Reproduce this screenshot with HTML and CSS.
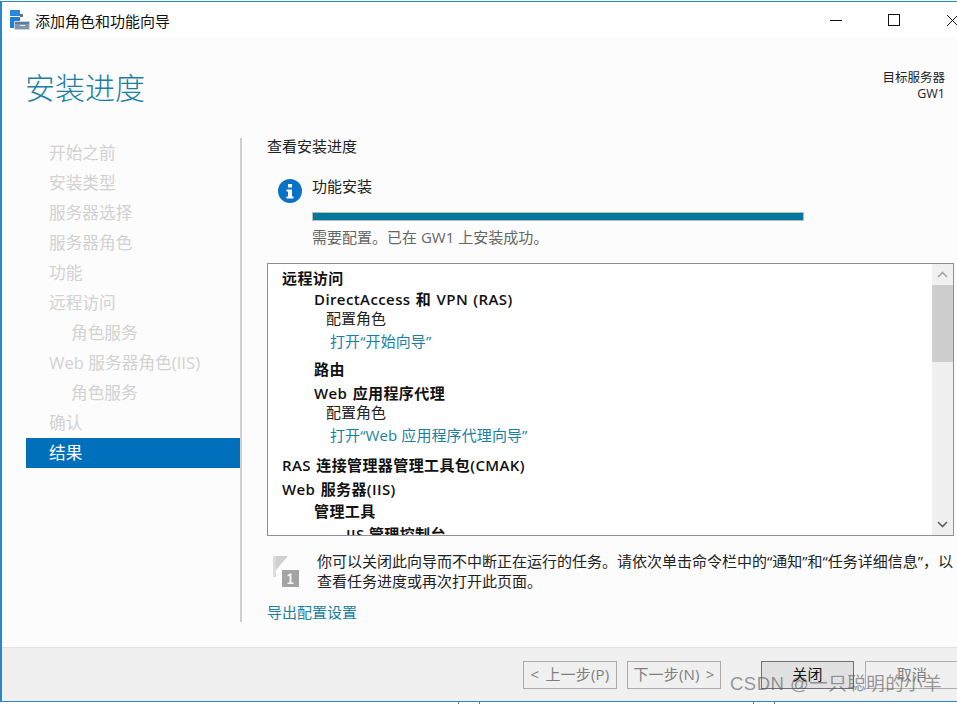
FILE: index.html
```html
<!DOCTYPE html>
<html lang="zh-CN">
<head>
    <meta charset="UTF-8">
    <title>添加角色和功能向导</title>
    <link rel="stylesheet" href="styles.css">
</head>
<body>
    <div class="window">
        <!-- Title bar -->
        <div class="titlebar">
            <svg class="app-icon" width="20" height="20" viewBox="0 0 20 20">
                <rect x="0" y="0" width="10" height="6" fill="#2a87d8"/>
                <rect x="0" y="7" width="10" height="11" fill="#1e7fd6"/>
                <rect x="10" y="4" width="3" height="3" fill="#5b6f86"/>
                <rect x="4" y="11" width="16" height="9" rx="1" fill="#c9d6e0"/>
                <rect x="5" y="12" width="14" height="7" fill="#7f97ad"/>
                <rect x="5" y="12" width="14" height="2" fill="#5f7a94"/>
                <rect x="10" y="15" width="5" height="1" fill="#e8eef3"/>
            </svg>
            <span class="title-text">添加角色和功能向导</span>
            <div class="win-buttons">
                <svg width="13" height="13" viewBox="0 0 13 13"><path d="M0 6.5H12" stroke="#111" fill="none"/></svg>
                <svg width="13" height="13" viewBox="0 0 13 13"><rect x="0.5" y="0.5" width="11" height="11" stroke="#111" fill="none"/></svg>
                <svg width="13" height="13" viewBox="0 0 13 13"><path d="M1 1L12 12M12 1L1 12" stroke="#111" fill="none"/></svg>
            </div>
        </div>

        <!-- Heading -->
        <div class="page-head">
            <h1>安装进度</h1>
            <div class="target">目标服务器<br>GW1</div>
        </div>

        <div class="content">
            <!-- Steps -->
            <ul class="steps">
                <li>开始之前</li>
                <li>安装类型</li>
                <li>服务器选择</li>
                <li>服务器角色</li>
                <li>功能</li>
                <li>远程访问</li>
                <li class="sub">角色服务</li>
                <li>Web 服务器角色(IIS)</li>
                <li class="sub">角色服务</li>
                <li>确认</li>
                <li class="active">结果</li>
            </ul>

            <div class="main">
                <div class="section-title">查看安装进度</div>

                <div class="status">
                    <svg class="info-icon" width="24" height="24" viewBox="0 0 24 24">
                        <circle cx="12" cy="12" r="12" fill="#0a72c6"/>
                        <rect x="10" y="5" width="4" height="3.5" fill="#fff"/>
                        <path d="M8.5 10.5H14V17.5H15.5V19.5H8.5V17.5H10V12.5H8.5Z" fill="#fff"/>
                    </svg>
                    <div class="status-body">
                        <div class="status-name">功能安装</div>
                        <div class="progress"><div class="progress-fill"></div></div>
                        <div class="status-msg">需要配置。已在 GW1 上安装成功。</div>
                    </div>
                </div>

                <div class="result-box">
                    <div class="result-list">
                        <div class="r1">远程访问</div>
                        <div class="r2 row-a">DirectAccess 和 VPN (RAS)</div>
                        <div class="r3">配置角色</div>
                        <div class="rlink">打开“开始向导”</div>
                        <div class="r2 row-b">路由</div>
                        <div class="r2 row-c">Web 应用程序代理</div>
                        <div class="r3">配置角色</div>
                        <div class="rlink">打开“Web 应用程序代理向导”</div>
                        <div class="r1 row-d">RAS 连接管理器管理工具包(CMAK)</div>
                        <div class="r1 row-c">Web 服务器(IIS)</div>
                        <div class="r2 row-e">管理工具</div>
                        <div class="r4">IIS 管理控制台</div>
                    </div>
                    <div class="scrollbar">
                        <div class="arrow">
                            <svg width="11" height="7" viewBox="0 0 11 7"><path d="M1 6L5.5 1.5L10 6" stroke="#a6a6a6" stroke-width="1.6" fill="none"/></svg>
                        </div>
                        <div class="thumb"></div>
                        <div class="track"></div>
                        <div class="arrow">
                            <svg width="11" height="7" viewBox="0 0 11 7"><path d="M1 1L5.5 5.5L10 1" stroke="#606060" stroke-width="1.6" fill="none"/></svg>
                        </div>
                    </div>
                </div>

                <div class="notice">
                    <svg class="flag-icon" width="27" height="32" viewBox="0 0 27 32">
                        <rect x="0" y="0" width="3" height="21" fill="#dcdcdc"/>
                        <path d="M3 0H15L3 14Z" fill="#d0d0d0"/>
                        <rect x="9" y="14" width="17" height="17" fill="#a3a3a3"/>
                        <path d="M18.5 17.5H17L14.5 19V20.5L16.5 19.7V26.5H14.5V28H20.5V26.5H18.5Z" fill="#f4f4f4"/>
                    </svg>
                    <p>你可以关闭此向导而不中断正在运行的任务。请依次单击命令栏中的“通知”和“任务详细信息”，以查看任务进度或再次打开此页面。</p>
                </div>

                <a class="export-link">导出配置设置</a>
            </div>
        </div>

        <!-- Footer -->
        <div class="footer">
            <button class="btn" disabled>&lt; 上一步(P)</button>
            <button class="btn" disabled>下一步(N) &gt;</button>
            <button class="btn btn-close">关闭</button>
            <button class="btn btn-cancel" disabled>取消</button>
        </div>
        <div class="watermark">CSDN @一只聪明的小羊</div>
    </div>
    <div class="tick tick-left"></div>
    <div class="tick tick-right"></div>
</body>
</html>
```

FILE: styles.css
```css
html, body {
    margin: 0;
    height: 100%;
    overflow: hidden;
}
body {
    position: relative;
    font-family: "Open Sans", "Noto Sans CJK SC", sans-serif;
    font-size: 15px;
    color: #1a1a1a;
    background-color: #fff;
}
.window {
    position: relative;
    width: 957px;
    height: 701px;
    box-sizing: border-box;
    margin-top: 1px;
    border-top: 1px solid #2b86cc;
    border-left: 2px solid #2b86cc;
    border-bottom: 1px solid #2b86cc;
    background-color: #fcfcfc;
    display: flex;
    flex-direction: column;
    overflow: hidden;
}
.tick {
    position: absolute;
    top: 702px;
    width: 20px;
    height: 2px;
    border-left: 1px solid #777;
    border-right: 1px solid #777;
}
.tick-left {
    left: 458px;
}
.tick-right {
    left: 753px;
}
.titlebar {
    height: 36px;
    flex: none;
    background-color: #fff;
    display: flex;
    align-items: center;
    padding-left: 8px;
}
.app-icon {
    margin-right: 5px;
}
.title-text {
    font-size: 15px;
    color: #111;
}
.win-buttons {
    margin-left: auto;
    margin-right: -2px;
    display: flex;
    gap: 45px;
}
.page-head {
    height: 100px;
    flex: none;
    display: flex;
    justify-content: space-between;
    box-sizing: border-box;
    padding: 31px 12px 0 23px;
}
.page-head h1 {
    margin: 0;
    font-size: 30px;
    line-height: 38px;
    font-weight: 300;
    color: #1a7fa3;
}
.target {
    margin-top: 1px;
    font-size: 12.5px;
    line-height: 16px;
    text-align: right;
    color: #222;
}
.content {
    flex: 1;
    display: flex;
    min-height: 0;
}
.steps {
    list-style: none;
    margin: 0 0 25px 24px;
    padding: 0;
    width: 216px;
    height: 484px;
    box-sizing: border-box;
    flex: none;
    border-right: 2px solid #d0d0d0;
}
.steps li {
    height: 30px;
    line-height: 30px;
    padding-left: 23px;
    font-size: 16.7px;
    color: #d2d2d2;
    white-space: nowrap;
}
.steps li.sub {
    padding-left: 45px;
}
.steps li.active {
    width: 214px;
    box-sizing: border-box;
    background-color: #0070bd;
    color: #fff;
}
.main {
    flex: 1;
    min-width: 0;
    padding-left: 25px;
    display: flex;
    flex-direction: column;
}
.section-title {
    height: 18px;
    line-height: 18px;
    margin-top: -1px;
    margin-bottom: 22px;
    color: #222;
}
.status {
    display: flex;
    margin-left: 11px;
}
.info-icon {
    flex: none;
    margin-right: 10px;
    margin-top: 2px;
}
.status-name {
    line-height: 18px;
    color: #222;
}
.progress {
    width: 492px;
    height: 9px;
    margin-top: 17px;
    box-sizing: border-box;
    border: 1px solid #bcbcbc;
    background-color: #e6e6e6;
}
.progress-fill {
    height: 100%;
    background-color: #00779b;
}
.status-msg {
    margin-top: 6px;
    line-height: 20px;
    color: #666;
}
.result-box {
    width: 687px;
    height: 273px;
    margin-top: 16px;
    box-sizing: border-box;
    border: 1px solid #8e8f94;
    background-color: #fff;
    display: flex;
}
.result-list {
    flex: 1;
    min-width: 0;
    overflow: hidden;
    padding: 4px 0 0 14px;
    font-size: 15px;
    line-height: 20px;
}
.result-list > div {
    white-space: nowrap;
}
.r1, .r2, .r4 {
    font-weight: 600;
    color: #111;
    letter-spacing: 0.4px;
}
.r1, .r2 {
    word-spacing: 1px;
}
.r2 {
    padding-left: 32px;
}
.r3 {
    padding-left: 44px;
    margin-top: -1px;
    color: #222;
}
.r4 {
    padding-left: 64px;
    margin-top: 3px;
}
.rlink {
    padding-left: 48px;
    margin-top: 3px;
    color: #1a7fa3;
    letter-spacing: 0.1px;
}
.row-a {
    margin-top: 1px;
}
.row-b {
    margin-top: 8px;
}
.row-c {
    margin-top: 4px;
}
.row-d {
    margin-top: 10px;
}
.row-e {
    margin-top: 2px;
}
.scrollbar {
    flex: none;
    width: 21px;
    background-color: #f0f0f0;
    display: flex;
    flex-direction: column;
}
.arrow {
    height: 21px;
    flex: none;
    display: flex;
    align-items: center;
    justify-content: center;
}
.thumb {
    height: 77px;
    flex: none;
    background-color: #cdcdcd;
}
.track {
    flex: 1;
}
.notice {
    display: flex;
    margin-top: 15px;
}
.flag-icon {
    flex: none;
    margin: 5px 17px 0 6px;
}
.notice p {
    margin: 0;
    width: 640px;
    line-height: 20px;
    font-size: 15px;
    color: #222;
}
.export-link {
    margin-top: 11px;
    line-height: 20px;
    color: #1a7fa3;
}
.footer {
    height: 54px;
    flex: none;
    box-sizing: border-box;
    background-color: #f0f0f0;
    border-top: 1px solid #e2e2e2;
    display: flex;
    align-items: flex-start;
    padding: 13px 0 0 521px;
    gap: 10px;
}
.btn {
    width: 94px;
    height: 28px;
    flex: none;
    box-sizing: border-box;
    padding: 0 0 3px;
    font-family: inherit;
    font-size: 15px;
    letter-spacing: 0.2px;
    word-spacing: 2px;
    background-color: #f0f0f0;
    border: 1px solid #adadad;
    color: #7f7f7f;
}
.btn-close {
    width: 93px;
    margin-left: 30px;
    background-color: #e1e1e1;
    border-color: #707070;
    color: #111;
}
.btn-cancel {
    margin-left: 1px;
}
.watermark {
    position: absolute;
    left: 728px;
    top: 670px;
    font-family: "Liberation Sans", "Noto Sans CJK SC", sans-serif;
    font-size: 18.5px;
    letter-spacing: 0.5px;
    line-height: 24px;
    color: rgba(90, 90, 90, 0.62);
    white-space: nowrap;
}
```
